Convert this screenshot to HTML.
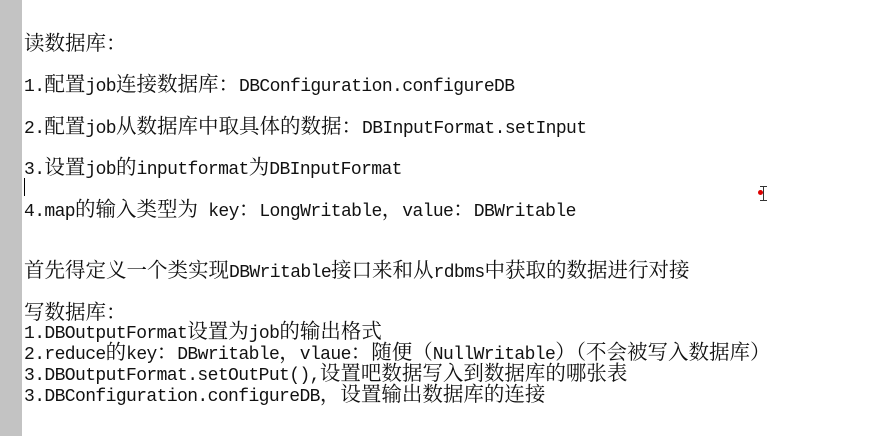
<!DOCTYPE html>
<html><head><meta charset="utf-8"><style>
body{margin:0;width:888px;height:436px;background:#fff;position:relative;overflow:hidden;font-family:"Liberation Mono",monospace;font-size:18px;letter-spacing:-0.6px;color:#111}
.bar{position:absolute;left:0;top:0;width:22px;height:436px;background:#c3c3c3}
.l{position:absolute;left:24px;white-space:pre;line-height:20px}
.c{font-family:"Noto Serif CJK SC","Noto Sans CJK SC",serif;font-size:20.5px;font-weight:normal;letter-spacing:0}
</style></head><body>
<div class="bar"></div>
<div class="l" style="top:31px"><b class="c">读数据库：</b></div>
<div class="l" style="top:72px">1.<b class="c">配置</b>job<b class="c">连接数据库：</b>DBConfiguration.configureDB</div>
<div class="l" style="top:114px">2.<b class="c">配置</b>job<b class="c">从数据库中取具体的数据：</b>DBInputFormat.setInput</div>
<div class="l" style="top:155px">3.<b class="c">设置</b>job<b class="c">的</b>inputformat<b class="c">为</b>DBInputFormat</div>
<div style="position:absolute;left:24px;top:178px;width:1px;height:18px;background:#000"></div>
<div class="l" style="top:197px">4.map<b class="c">的输入类型为</b> key<b class="c">：</b>LongWritable<b class="c">，</b>value<b class="c">：</b>DBWritable</div>
<div class="l" style="top:258px"><b class="c">首先得定义一个类实现</b>DBWritable<b class="c">接口来和从</b>rdbms<b class="c">中获取的数据进行对接</b></div>
<div class="l" style="top:300px"><b class="c">写数据库：</b></div>
<div class="l" style="top:319px">1.DBOutputFormat<b class="c">设置为</b>job<b class="c">的输出格式</b></div>
<div class="l" style="top:340px">2.reduce<b class="c">的</b>key<b class="c">：</b>DBwritable<b class="c">，</b>vlaue<b class="c">：随便（</b>NullWritable<b class="c">）（不会被写入数据库）</b></div>
<div class="l" style="top:361px">3.DBOutputFormat.setOutPut(),<b class="c">设置吧数据写入到数据库的哪张表</b></div>
<div class="l" style="top:382px">3.DBConfiguration.configureDB<b class="c">，设置输出数据库的连接</b></div>
<div style="position:absolute;left:763px;top:186px;width:1px;height:14px;background:#333"></div>
<div style="position:absolute;left:760px;top:186px;width:7px;height:1px;background:#333"></div>
<div style="position:absolute;left:760px;top:200px;width:7px;height:1px;background:#333"></div>
<div style="position:absolute;left:758px;top:190px;width:5px;height:5px;border-radius:50%;background:#d00"></div>
</body></html>
